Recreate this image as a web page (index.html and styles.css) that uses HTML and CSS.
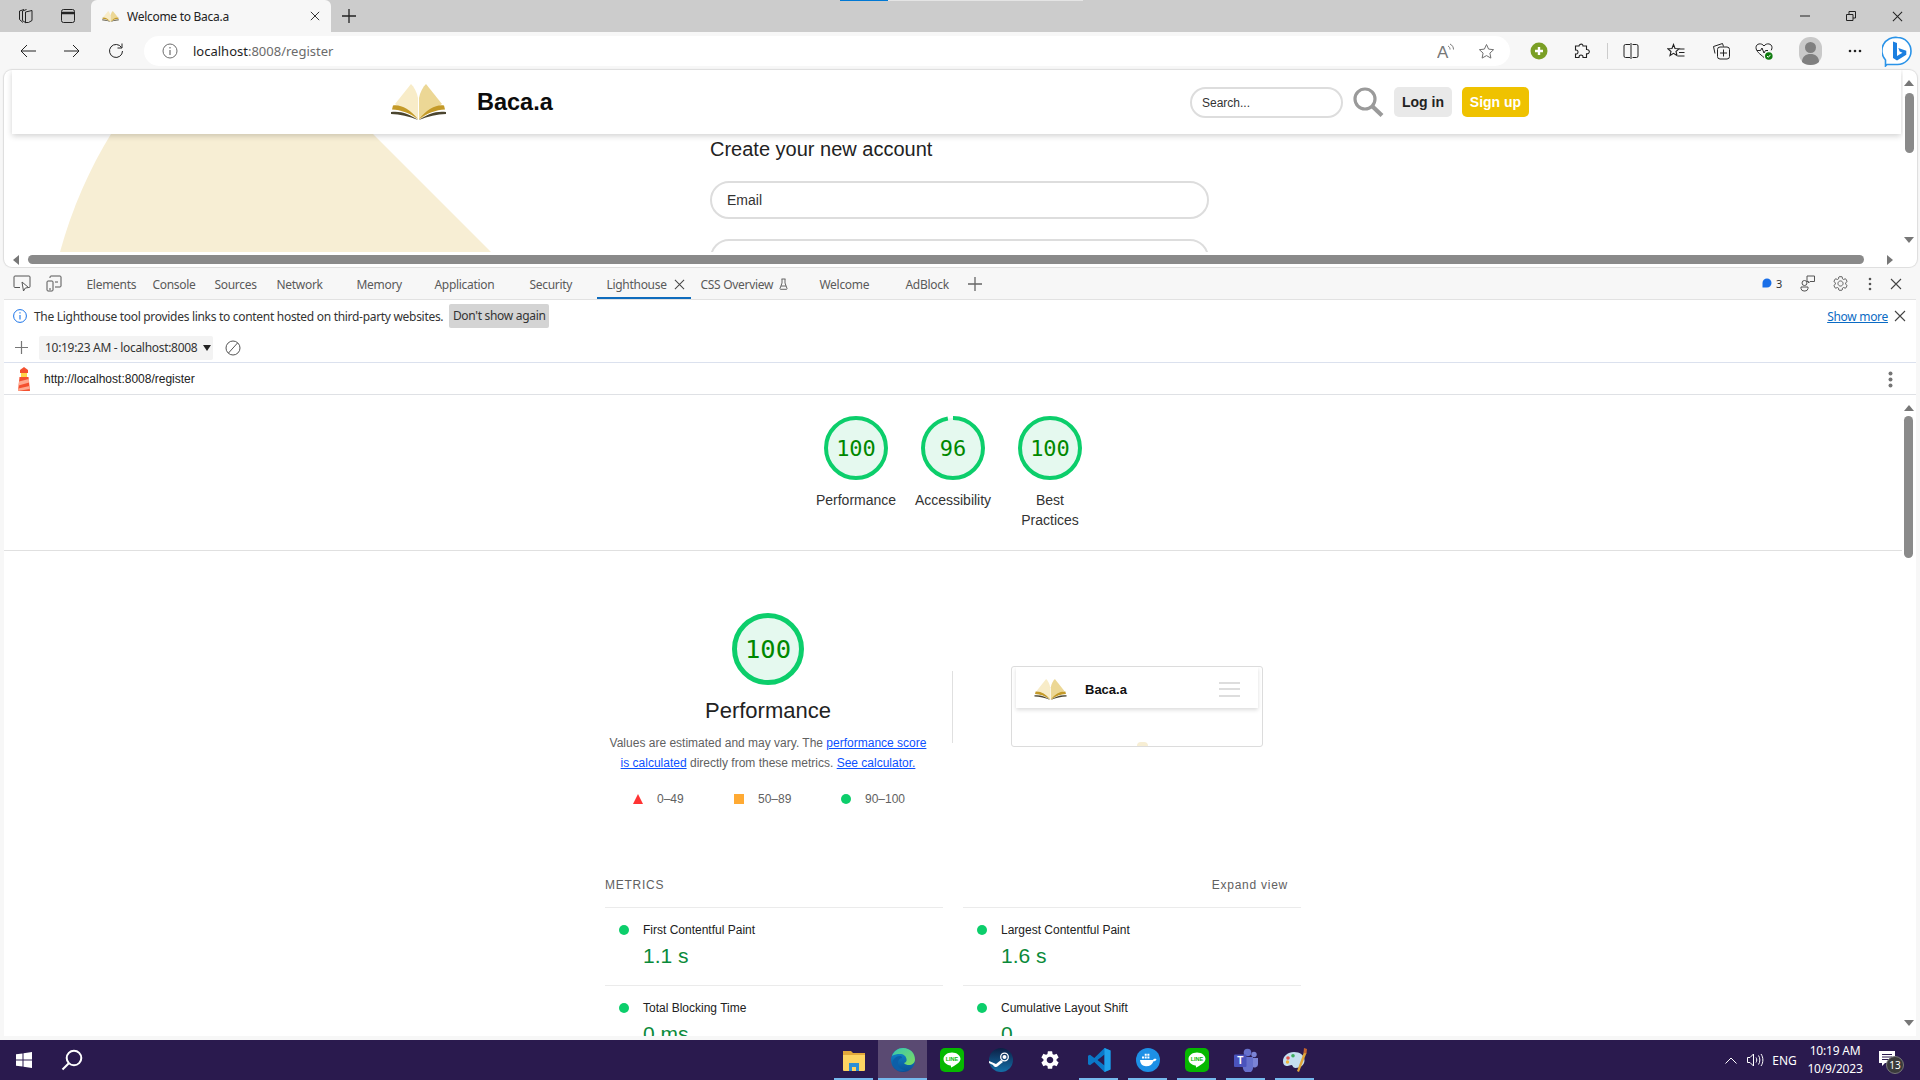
FILE: index.html
```html
<!DOCTYPE html>
<html lang="en">
<head>
<meta charset="utf-8">
<title>Welcome to Baca.a</title>
<link rel="stylesheet" href="styles.css">
</head>
<body>
<svg class="defs" aria-hidden="true">
  <symbol id="book" viewBox="0 0 55 36">
    <path d="M20 0 4 20l23 16V14C26 8 23 3 20 0Z" fill="#f8ecc8"/>
    <path d="M35 0 51 20 28 36V14C29 8 32 3 35 0Z" fill="#ecd795"/>
    <path d="M2 21.500C9 20 19 25 27 35 19 29 10 26 1 25.500Z" fill="#c49a28"/>
    <path d="M53 21.500C46 20 36 25 28 35 36 29 45 26 54 25.500Z" fill="#c49a28"/>
    <path d="M0 28C9 26.500 19 30 27 36 18 32 9 30.500 0 30Z" fill="#4b452f"/>
    <path d="M55 28C46 26.500 36 30 28 36 37 32 46 30.500 55 30Z" fill="#4b452f"/>
  </symbol>
  <symbol id="cross" viewBox="0 0 12 12"><path d="M1 1l10 10M11 1 1 11" fill="none" stroke="currentColor" stroke-width="1.100"/></symbol>
  <symbol id="plus" viewBox="0 0 14 14"><path d="M7 0v14M0 7h14" fill="none" stroke="currentColor" stroke-width="1.300"/></symbol>
  <symbol id="gear" viewBox="0 0 24 24"><path d="M19.140 12.940c.04-.3.06-.61.06-.94 0-.32-.02-.64-.07-.94l2.030-1.580a.49.49 0 0 0 .12-.61l-1.920-3.320a.488.488 0 0 0-.59-.22l-2.390.96c-.5-.38-1.030-.7-1.620-.94l-.36-2.540a.484.484 0 0 0-.48-.41h-3.840c-.24 0-.43.17-.47.41l-.36 2.540c-.59.24-1.130.57-1.620.94l-2.390-.96c-.22-.08-.47 0-.59.22L2.740 8.870c-.12.21-.08.47.12.61l2.030 1.580c-.05.3-.09.63-.09.94s.02.64.07.94l-2.030 1.580a.49.49 0 0 0-.12.61l1.920 3.320c.12.22.37.29.59.22l2.390-.96c.5.38 1.030.7 1.620.94l.36 2.540c.05.24.24.41.48.41h3.840c.24 0 .44-.17.47-.41l.36-2.540c.59-.24 1.130-.56 1.620-.94l2.390.96c.22.08.47 0 .59-.22l1.920-3.320c.12-.22.07-.47-.12-.61l-2.010-1.580zM12 15.600c-1.980 0-3.600-1.620-3.600-3.600s1.620-3.600 3.600-3.600 3.600 1.620 3.600 3.600-1.620 3.600-3.600 3.600z"/></symbol>
  <symbol id="line" viewBox="0 0 24 24">
    <rect width="24" height="24" rx="5" fill="#06b800"/>
    <path d="M12 4.500c-4.700 0-8.500 2.900-8.500 6.600 0 3.300 3 6 7 6.500.6.100.5.700.4 1.400 0 .5.300.6.800.3 2.200-1.300 8.800-4.500 8.800-8.200 0-3.700-3.800-6.600-8.500-6.600Z" fill="#fff"/>
  </symbol>
</svg>

<div class="progress"><span class="progress-on"></span><span class="progress-off"></span></div>

<header class="titlebar">
  <div class="slot-title">
    <svg width="16" height="16" viewBox="0 0 16 16" class="ink"><path d="M6 1.500 1.500 3v8.500L5 14.500M8.500 1.500 4.500 3v9.500l3.500 2.500M7.500 4l6.500-1.500v10L10.500 14.500H7.500Z" fill="none" stroke="currentColor"/></svg>
  </div>
  <div class="slot-title">
    <svg width="16" height="16" viewBox="0 0 16 16" class="ink"><rect x="1.500" y="1.500" width="13" height="13" rx="2" fill="none" stroke="currentColor"/><path d="M1.500 5h13" stroke="currentColor" stroke-width="2.500"/></svg>
  </div>
  <div class="tab">
    <svg class="tab-fav" width="17" height="11"><use href="#book"/></svg>
    <span class="tab-title">Welcome to Baca.a</span>
    <svg class="tab-close ink" width="10" height="10"><use href="#cross"/></svg>
  </div>
  <div class="slot-new ink"><svg width="14" height="14"><use href="#plus"/></svg></div>
  <div class="winctl">
    <div class="win-btn ink"><svg width="10" height="10" viewBox="0 0 10 10"><path d="M0 5h10" stroke="currentColor"/></svg></div>
    <div class="win-btn ink"><svg width="10" height="10" viewBox="0 0 10 10"><path d="M.5 3.500h6.500v6H.5zM3 3.500V.5h6.500V7H7" fill="none" stroke="currentColor"/></svg></div>
    <div class="win-btn ink"><svg width="11" height="11"><use href="#cross"/></svg></div>
  </div>
</header>

<nav class="toolbar">
  <div class="nav-btn ink"><svg width="16" height="14" viewBox="0 0 16 14"><path d="M7 1 1 7l6 6M1 7h15" fill="none" stroke="currentColor"/></svg></div>
  <div class="nav-btn ink"><svg width="16" height="14" viewBox="0 0 16 14"><path d="M9 1l6 6-6 6M15 7H0" fill="none" stroke="currentColor"/></svg></div>
  <div class="nav-btn ink"><svg width="16" height="16" viewBox="0 0 16 16"><path d="M13.500 4.500A6.500 6.500 0 1 0 14.500 8M14 .5v4.500H9.500" fill="none" stroke="currentColor"/></svg></div>
  <div class="address">
    <svg class="addr-info" width="16" height="16" viewBox="0 0 16 16"><circle cx="8" cy="8" r="7" fill="none" stroke="#6e6e6e"/><path d="M8 7v5M8 4v1.500" stroke="#6e6e6e" stroke-width="1.200"/></svg>
    <span class="addr-text"><span class="addr-host">localhost</span>:8008/register</span>
    <div class="addr-end">
      <div class="addr-btn"><svg width="18" height="22" viewBox="0 -3 18 22"><text x="0" y="14.500" class="read-a">A</text><path d="M11 3c1.500.8 2 2 2 3.500M13 1c2.500 1.300 3.500 3.300 3.500 5.500" fill="none" stroke="#777"/></svg></div>
      <div class="addr-btn"><svg width="17" height="17" viewBox="0 0 17 17"><path d="m8.500 1.500 2.100 4.600 5 .6-3.700 3.400 1 5-4.400-2.500-4.400 2.500 1-5L1.400 6.700l5-.6Z" fill="none" stroke="#707070"/></svg></div>
    </div>
  </div>
  <div class="tools">
    <div class="tool"><svg width="18" height="18" viewBox="0 0 18 18"><circle cx="9" cy="9" r="8.500" fill="#7a9f25"/><path d="M9 5v8M5 9h8" stroke="#fff" stroke-width="2.400"/></svg></div>
    <div class="tool ink"><svg width="16" height="17" viewBox="0 0 16 17"><path d="M6 1.500c1.500-1 3 0 3 1.500h3.500v3.500c1.800-.2 3 1 2.800 2.500-.2 1.300-1.300 2-2.800 1.800v3.700H9c.2-1.500-.8-2.500-2-2.500s-2 1-2 2.500H1.500V11c1.500.2 2.500-.6 2.500-2s-1-2.300-2.500-2V3H5c0-.6.400-1.100 1-1.500Z" fill="none" stroke="currentColor" stroke-width="1.100"/></svg></div>
    <div class="tool-sep"></div>
    <div class="tool ink"><svg width="16" height="16" viewBox="0 0 16 16"><path d="M7 1.500H2.500a1.500 1.500 0 0 0-1.500 1.500v10a1.500 1.500 0 0 0 1.500 1.500H7M9.500 1.500h4A1.500 1.500 0 0 1 15 3v10a1.500 1.500 0 0 1-1.500 1.500h-4M8 0v16" fill="none" stroke="currentColor"/></svg></div>
    <div class="tool ink"><svg width="18" height="17" viewBox="0 0 18 17"><path d="M6.500 1.500 8 5.500l4 .3-3 2.700 1 4-3.500-2.200L3 12.500l1-4-3-2.700 4-.3ZM12 6h5.500M12 9.500h5.500M11 13h6.500" fill="none" stroke="currentColor" stroke-width="1.100"/></svg></div>
    <div class="tool ink"><svg width="18" height="18" viewBox="0 0 18 18"><path d="M3 11.500 1.500 4.500 10.500 1.500l1 3" fill="none" stroke="currentColor"/><rect x="5.500" y="5" width="12" height="12" rx="2.500" fill="#f7f7f7" stroke="currentColor"/><path d="M11.500 7.500v7M8 11h7" stroke="currentColor"/></svg></div>
    <div class="tool ink"><svg width="18" height="18" viewBox="0 0 18 18"><path d="M9 15.500C5 12 1 9.500 1 5.500 1 1.500 6.500.5 9 4c2.500-3.500 8-2.500 8 1.500 0 1-.3 2-.8 2.800" fill="none" stroke="currentColor"/><path d="M2 8.500h3.500L7 6l2 5 1.500-2.500H13" fill="none" stroke="currentColor"/><circle cx="13.800" cy="14" r="3.800" fill="#0f7b0f"/><path d="m12 14 1.300 1.300 2.200-2.500" fill="none" stroke="#fff"/></svg></div>
    <div class="tool"><svg width="23" height="28" viewBox="0 0 23 28"><rect width="23" height="28" rx="11" fill="#c9c9c9"/><circle cx="11.500" cy="10.500" r="5.500" fill="#7f7f7f"/><path d="M3 25c0-5.500 4-8 8.500-8s8.500 2.500 8.500 8c-2 2-5 3-8.500 3S5 27 3 25Z" fill="#7f7f7f"/></svg></div>
    <div class="tool ink"><svg width="14" height="4" viewBox="0 0 14 4"><circle cx="2" cy="2" r="1.300"/><circle cx="7" cy="2" r="1.300"/><circle cx="12" cy="2" r="1.300"/></svg></div>
    <div class="tool"><svg width="31" height="31" viewBox="0 0 31 31"><path d="M15.500 1.500a13.500 13.500 0 0 1 0 27H5l-1.500 1.500v-6A13.500 13.500 0 0 1 15.500 1.500Z" fill="#fff" stroke="#2a93e8" stroke-width="1.600"/><path d="M11 5.500l4 1.500v13l5.500-3.200-2.800-1.300-1.400-3.500 8 2.800v4l-9.300 5.800L11 22Z" fill="#1b7fe0"/></svg></div>
  </div>
</nav>

<section class="viewport">
  <div class="page-col">
    <div class="page">
      <div class="site-header">
        <svg class="site-logo" width="55" height="36"><use href="#book"/></svg>
        <span class="site-name">Baca.a</span>
        <div class="site-actions">
          <div class="site-search">Search...</div>
          <svg width="31" height="30" viewBox="0 0 31 30"><circle cx="12" cy="12" r="10" fill="none" stroke="#9a9a9a" stroke-width="3.200"/><path d="m19 19 10 9.500" stroke="#9a9a9a" stroke-width="4.200"/></svg>
          <div class="btn btn-login">Log in</div>
          <div class="btn btn-signup">Sign up</div>
        </div>
      </div>
      <div class="page-body">
        <svg class="hero" width="431" height="118" viewBox="0 0 431 118"><path d="M51 0h262l118 118H0C12 74 30 34 51 0Z" fill="#f7eed4"/></svg>
        <div class="signup-form">
          <h1 class="signup-title">Create your new account</h1>
          <div class="field">Email</div>
          <div class="field"></div>
        </div>
      </div>
    </div>
    <div class="hbar">
      <svg width="6" height="10" viewBox="0 0 6 10"><path d="M6 0v10L0 5Z" fill="#777"/></svg>
      <div class="hbar-thumb"></div>
      <svg width="6" height="10" viewBox="0 0 6 10"><path d="M0 0v10l6-5Z" fill="#777"/></svg>
    </div>
  </div>
  <div class="vbar vbar-top">
    <svg class="arrow" width="10" height="6" viewBox="0 0 10 6"><path d="M0 6h10L5 0Z" fill="#777"/></svg>
    <div class="vbar-thumb vbar-thumb-page"></div>
    <svg class="arrow arrow-end" width="10" height="6" viewBox="0 0 10 6"><path d="M0 0h10L5 6Z" fill="#777"/></svg>
  </div>
</section>

<section class="devtools">
  <div class="dt-tabs">
    <div class="dt-ic dt-ic-a"><svg width="18" height="17" viewBox="0 0 18 17"><path d="M7 12.500H2a1 1 0 0 1-1-1V2a1 1 0 0 1 1-1h14a1 1 0 0 1 1 1v9.500a1 1 0 0 1-1 1h-1" fill="none" stroke="#555"/><path d="m9 7 1.500 9 1.800-3 3.200-.5Z" fill="#fff" stroke="#555"/></svg></div>
    <div class="dt-ic dt-ic-b"><svg width="16" height="17" viewBox="0 0 16 17"><rect x="1" y="6" width="6" height="10" rx="1" fill="none" stroke="#555"/><path d="M4 3V2a1 1 0 0 1 1-1h9a1 1 0 0 1 1 1v9a1 1 0 0 1-1 1H9M9 7h3" fill="none" stroke="#555"/><path d="M3 14h2" stroke="#555"/></svg></div>
    <div class="dt-list">
      <span class="dt-tab">Elements</span>
      <span class="dt-tab">Console</span>
      <span class="dt-tab">Sources</span>
      <span class="dt-tab">Network</span>
      <span class="dt-tab">Memory</span>
      <span class="dt-tab">Application</span>
      <span class="dt-tab">Security</span>
      <span class="dt-tab dt-tab-on">Lighthouse<svg class="dt-x" width="11" height="11"><use href="#cross"/></svg></span>
      <span class="dt-tab">CSS Overview<svg class="dt-flask" width="9" height="12" viewBox="0 0 9 12"><path d="M2.500 1h4M3 1v4L1 10.500a.5.5 0 0 0 .5.800h6a.5.500 0 0 0 .5-.8L6 5V1M2 8h5" fill="none" stroke="#666"/></svg></span>
      <span class="dt-tab">Welcome</span>
      <span class="dt-tab">AdBlock<svg class="dt-plus" width="14" height="14"><use href="#plus"/></svg></span>
    </div>
    <div class="dt-right">
      <span class="dt-count"><svg width="10" height="11" viewBox="0 0 10 11"><path d="M5 .5a4.500 4.500 0 0 1 0 9H0.500V5A4.500 4.500 0 0 1 5 .5Z" fill="#1a6fe8"/></svg>3</span>
      <div class="dt-rbtn dt-r1"><svg width="16" height="17" viewBox="0 0 16 17"><circle cx="4.500" cy="8" r="2.500" fill="none" stroke="#555"/><path d="M1 12h7v1.500A3 3 0 0 1 5 16H4a3 3 0 0 1-3-2.500ZM7 1h7.500v5.500H10L8.500 8V6.500H7Z" fill="none" stroke="#555"/></svg></div>
      <div class="dt-rbtn dt-r2"><svg class="gear-line" width="17" height="17"><use href="#gear"/></svg></div>
      <div class="dt-rbtn dt-r3"><svg width="4" height="14" viewBox="0 0 4 14"><circle cx="2" cy="2" r="1.300" fill="#555"/><circle cx="2" cy="7" r="1.300" fill="#555"/><circle cx="2" cy="12" r="1.300" fill="#555"/></svg></div>
      <div class="dt-rbtn dt-r4"><svg width="12" height="12"><use href="#cross"/></svg></div>
    </div>
  </div>
  <div class="infobar">
    <svg width="14" height="14" viewBox="0 0 14 14"><circle cx="7" cy="7" r="6.400" fill="none" stroke="#1a73e8"/><path d="M7 6v4.500M7 3.200v1.400" stroke="#1a73e8" stroke-width="1.100"/></svg>
    <span class="info-text">The Lighthouse tool provides links to content hosted on third-party websites.</span>
    <span class="info-btn">Don't show again</span>
    <span class="info-more">Show more</span>
    <svg class="info-x" width="12" height="12"><use href="#cross"/></svg>
  </div>
  <div class="lh-bar">
    <div class="lh-add"><svg width="13" height="13"><use href="#plus"/></svg></div>
    <div class="lh-select">10:19:23 AM - localhost:8008<svg width="8" height="6" viewBox="0 0 8 6"><path d="M0 0h8L4 6Z" fill="#222"/></svg></div>
    <svg class="lh-block" width="16" height="16" viewBox="0 0 16 16"><circle cx="8" cy="8" r="7" fill="none" stroke="#555"/><path d="M3.500 13 12.500 3" stroke="#555"/></svg>
  </div>
  <div class="lh-url">
    <svg width="16" height="24" viewBox="0 0 16 24"><path d="M8 0 12 3v3H4V3Z" fill="#f4502f"/><rect x="5" y="6" width="6" height="4" fill="#ffd54a"/><path d="M3.500 10h9l1.500 14H2Z" fill="#f4502f"/><path d="M3 14.500 12.800 12l.4 3.500L2.600 18.500ZM2.300 21.500 13.500 19l.3 3L2 24Z" fill="#ffa98f"/></svg>
    <span class="lh-url-text">http://localhost:8008/register</span>
    <svg class="lh-url-dots" width="5" height="17" viewBox="0 0 5 17"><circle cx="2.500" cy="2.500" r="2" fill="#757575"/><circle cx="2.500" cy="8.500" r="2" fill="#757575"/><circle cx="2.500" cy="14.500" r="2" fill="#757575"/></svg>
  </div>
  <div class="report-wrap">
    <div class="report">
      <div class="scores">
        <div class="score">
          <svg class="gauge" width="64" height="64" viewBox="0 0 64 64"><circle cx="32" cy="32" r="30" class="g-ring"/><text x="32" y="39.500" class="g-num">100</text></svg>
          <div class="score-label">Performance</div>
        </div>
        <div class="score">
          <svg class="gauge" width="64" height="64" viewBox="0 0 64 64"><circle cx="32" cy="32" r="30" class="g-ring g-ring-96"/><text x="32" y="39.500" class="g-num">96</text></svg>
          <div class="score-label">Accessibility</div>
        </div>
        <div class="score">
          <svg class="gauge" width="64" height="64" viewBox="0 0 64 64"><circle cx="32" cy="32" r="30" class="g-ring"/><text x="32" y="39.500" class="g-num">100</text></svg>
          <div class="score-label">Best Practices</div>
        </div>
      </div>
      <div class="category">
        <div class="cat-top">
          <div class="cat-left">
            <svg class="gauge-big" width="72" height="72" viewBox="0 0 72 72"><circle cx="36" cy="36" r="33.500" class="g-ring g-ring-big"/><text x="36" y="45" class="g-num g-num-big">100</text></svg>
            <h2 class="cat-title">Performance</h2>
            <p class="cat-desc">Values are estimated and may vary. The <a class="lnk">performance score<br>is calculated</a> directly from these metrics. <a class="lnk">See calculator.</a></p>
            <div class="legend">
              <span class="leg"><svg width="10" height="10" viewBox="0 0 10 10"><path d="M5 0l5 10H0Z" fill="#f33"/></svg>0–49</span>
              <span class="leg"><svg width="10" height="10" viewBox="0 0 10 10"><rect width="10" height="10" fill="#fa3"/></svg>50–89</span>
              <span class="leg"><svg width="10" height="10" viewBox="0 0 10 10"><circle cx="5" cy="5" r="5" fill="#0cce6b"/></svg>90–100</span>
            </div>
          </div>
          <div class="cat-rule"></div>
          <div class="shot">
            <div class="shot-head">
              <svg width="33" height="21"><use href="#book"/></svg>
              <span class="shot-name">Baca.a</span>
              <div class="shot-menu"><i></i><i></i><i></i></div>
            </div>
            <div class="shot-body"><span class="shot-dot"></span></div>
          </div>
        </div>
        <div class="metrics-head"><span class="metrics-title">METRICS</span><span class="metrics-expand">Expand view</span></div>
        <div class="metrics">
          <div class="metric"><span class="m-dot"></span><div><div class="m-name">First Contentful Paint</div><div class="m-val">1.1 s</div></div></div>
          <div class="metric"><span class="m-dot"></span><div><div class="m-name">Largest Contentful Paint</div><div class="m-val">1.6 s</div></div></div>
          <div class="metric"><span class="m-dot"></span><div><div class="m-name">Total Blocking Time</div><div class="m-val">0 ms</div></div></div>
          <div class="metric"><span class="m-dot"></span><div><div class="m-name">Cumulative Layout Shift</div><div class="m-val">0</div></div></div>
        </div>
      </div>
    </div>
    <div class="vbar vbar-report">
      <svg class="arrow" width="10" height="6" viewBox="0 0 10 6"><path d="M0 6h10L5 0Z" fill="#777"/></svg>
      <div class="vbar-thumb vbar-thumb-report"></div>
      <svg class="arrow arrow-end" width="10" height="6" viewBox="0 0 10 6"><path d="M0 0h10L5 6Z" fill="#777"/></svg>
    </div>
  </div>
</section>

<footer class="taskbar">
  <div class="tb-slot"><svg width="16" height="16" viewBox="0 0 16 16"><path d="M0 2.300 6.500 1.400V7.500H0ZM7.500 1.300 16 0v7.500H7.500ZM0 8.500h6.500v6.100L0 13.700ZM7.500 8.500H16V16l-8.500-1.300Z" fill="#fff"/></svg></div>
  <div class="tb-slot"><svg width="22" height="22" viewBox="0 0 22 22"><circle cx="13" cy="9" r="7.300" fill="none" stroke="#fff" stroke-width="2"/><path d="M7.800 14.200 1.500 20.500" stroke="#fff" stroke-width="2"/></svg></div>
  <div class="apps">
    <div class="app app-run"><svg width="24" height="22" viewBox="0 0 24 22"><path d="M1 2h8l2 2h12v4H1Z" fill="#e2a83a"/><path d="M1 6h22v15a1 1 0 0 1-1 1H2a1 1 0 0 1-1-1Z" fill="#fcd462"/><path d="M7 14h10v8h-3v-4h-4v4H7Z" fill="#2a8fd6"/></svg></div>
    <div class="app app-on"><svg width="24" height="24" viewBox="0 0 24 24"><defs><linearGradient id="edgeB" x1="0" y1="0" x2="0" y2="1"><stop offset="0" stop-color="#0f8fd0"/><stop offset="1" stop-color="#0a4f96"/></linearGradient><linearGradient id="edgeG" x1="0" y1="0" x2="1" y2="1"><stop offset="0" stop-color="#38c8b0"/><stop offset="1" stop-color="#7fdc5e"/></linearGradient></defs><circle cx="12" cy="12" r="12" fill="url(#edgeB)"/><path d="M1 8C3 3 7 0 12 0c7 0 12 5 12 11.500 0 3.500-3 5.500-6 5.500-2 0-4-.5-5-2 2-.5 3-2 2.500-4C15 8 12.500 6 9 6 6 6 3 6.500 1 8Z" fill="url(#edgeG)"/><path d="M11 10c-3 .5-4.500 3-4 6 .5 3.500 3.500 6 8 6-5 3-12 .5-13.500-6C1 12 5 8 9 8c1 0 2 .5 2 2Z" fill="#0c5fa8"/></svg></div>
    <div class="app"><svg width="24" height="26" viewBox="0 0 24 24"><use href="#line"/><text x="12" y="13.300" class="line-word">LINE</text></svg></div>
    <div class="app"><svg width="24" height="24" viewBox="0 0 24 24"><defs><linearGradient id="steamG" x1="0" y1="0" x2="0" y2="1"><stop offset="0" stop-color="#0c1f45"/><stop offset="1" stop-color="#1470a8"/></linearGradient></defs><circle cx="12" cy="12" r="12" fill="url(#steamG)"/><circle cx="15.500" cy="9" r="3.800" fill="none" stroke="#fff" stroke-width="1.300"/><circle cx="15.500" cy="9" r="2" fill="#fff"/><path d="M0 13l7 3 5-4 2 2-5 4a3 3 0 0 1-5-1L0 15Z" fill="#fff"/></svg></div>
    <div class="app"><svg class="gear-white" width="22" height="22"><use href="#gear"/></svg></div>
    <div class="app app-run"><svg width="24" height="26" viewBox="0 0 24 24"><path d="M17.500 0 7.300 10 3 6.700 1 7.700v8.600l2 1 4.300-3.300L17.500 24l6-2.500V2.500ZM17.500 6.500v11L10.500 12Z" fill="#0a78c8" fill-rule="evenodd"/><path d="M17.500 0l6 2.500v19l-6 2.500Z" fill="#1fa0ea"/></svg></div>
    <div class="app app-run"><svg width="24" height="24" viewBox="0 0 24 24"><circle cx="12" cy="12" r="12" fill="#1d90e6"/><path d="M4 12h13c.5-1 2-1.500 3.500-.8-.5 1.500-1.500 2-3 2-1 3-3.500 5-7.500 5-3.500 0-5.500-2-6-6.200Z" fill="#fff"/><path d="M6 8.500h2v2H6ZM8.700 8.500h2v2h-2ZM11.400 8.500h2v2h-2ZM8.700 5.800h2v2h-2ZM11.400 5.800h2v2h-2Z" fill="#fff"/></svg></div>
    <div class="app app-run"><svg width="24" height="26" viewBox="0 0 24 24"><use href="#line"/><text x="12" y="13.300" class="line-word">LINE</text></svg></div>
    <div class="app app-run"><svg width="24" height="24" viewBox="0 0 24 24"><circle cx="20" cy="6.500" r="2.700" fill="#7b83d6"/><path d="M17 10h7v6a3.500 3.500 0 0 1-6 2.500Z" fill="#7b83d6"/><circle cx="13.500" cy="4.500" r="3.800" fill="#6670cc"/><path d="M7 9h12v10a5 5 0 0 1-10 1.500Z" fill="#6670cc"/><rect y="6.500" width="12.500" height="12.500" rx="1" fill="#4a53bc"/><text x="6.250" y="16.300" class="teams-t">T</text></svg></div>
    <div class="app app-run"><svg width="24" height="26" viewBox="0 0 24 26"><path d="M11 5C5 5 0 9 0 14c0 4 2 5 4.500 5 1.500 0 2.500-1 4-1s1 3 4 3c5 0 9-3 9-7.500C21.500 8 17 5 11 5Z" fill="#c5dff0"/><circle cx="5" cy="11" r="1.800" fill="#e5534b"/><circle cx="10" cy="8.800" r="1.800" fill="#3dae5f"/><circle cx="4.500" cy="15" r="1.700" fill="#f0b73b"/><path d="M14 24 21 5l2.500 1L16 25Z" fill="#e0a63a"/><path d="M20.500 6 21 1l3 1-.5 4.500Z" fill="#c2622d"/></svg></div>
  </div>
  <div class="tray">
    <div class="tr-slot tr-caret"><svg width="12" height="7" viewBox="0 0 12 7"><path d="M.5 6.500 6 1l5.500 5.500" fill="none" stroke="#fff"/></svg></div>
    <div class="tr-slot tr-vol"><svg width="17" height="14" viewBox="0 0 17 14"><path d="M.5 4.500H3L6.500 1v12L3 9.500H.5ZM9 4.500c1 1.500 1 3.500 0 5M11.500 2.500c1.800 2.500 1.800 6.500 0 9M14 1c2.500 3.500 2.500 8.500 0 12" fill="none" stroke="#fff"/></svg></div>
    <div class="tr-slot tr-lang">ENG</div>
    <div class="tr-clock"><span>10:19 AM</span><span>10/9/2023</span></div>
    <div class="tr-note">
      <svg width="16" height="15" viewBox="0 0 16 15"><path d="M0 0h16v12H6L3 15v-3H0Z" fill="#fff"/><path d="M3 3.500h10M3 6h10M3 8.500h7" stroke="#2a1a4e"/></svg>
      <span class="tr-badge">13</span>
    </div>
  </div>
</footer>
</body>
</html>
```
FILE: styles.css
```css
* { box-sizing: border-box; }
html, body { margin: 0; height: 100%; }
body {
  width: 1920px;
  height: 1080px;
  overflow: hidden;
  display: flex;
  flex-direction: column;
  position: relative;
  background: #f7f7f7;
  font-family: "Liberation Sans", Arial, sans-serif;
  color: #222;
}
svg { display: block; flex: none; }
.defs { width: 0; height: 0; position: absolute; }
.ink { color: #222; fill: #222; }
.ink svg { fill: #222; }

.progress { position: absolute; top: 0; left: 840px; display: flex; height: 1px; }
.progress-on { width: 48px; background: #0078d4; }
.progress-off { width: 195px; background: #e4e4e4; }

/* window title bar */
.titlebar { height: 32px; flex: none; display: flex; padding-left: 5px; background: #ccc; }
.slot-title { width: 42px; display: flex; align-items: center; justify-content: center; }
.tab { width: 240px; margin-left: 2px; display: flex; align-items: center; background: #f7f7f7; border-radius: 6px 6px 0 0; padding-left: 11px; }
.tab-title { margin-left: 8px; font: 12px "Noto Sans", sans-serif; letter-spacing: -.28px; color: #222; }
.tab-close { margin-left: auto; margin-right: 11px; }
.slot-new { width: 36px; display: flex; align-items: center; justify-content: center; }
.winctl { margin-left: auto; display: flex; }
.win-btn { width: 46px; display: flex; align-items: center; justify-content: center; }

/* browser toolbar */
.toolbar { height: 38px; flex: none; padding: 4px 0 4px 6px; display: flex; align-items: center; background: #f7f7f7; }
.nav-btn { width: 44px; display: flex; justify-content: center; }
.nav-btn svg { fill: none; }
.address { width: 1366px; height: 30px; margin-left: 6px; display: flex; align-items: center; padding: 0 4px 0 18px; background: #fff; border-radius: 15px; }
.addr-text { margin-left: 15px; font: 13px "Noto Sans", sans-serif; color: #6b6b6b; }
.addr-host { color: #1e1e1e; }
.addr-end { margin-left: auto; display: flex; align-items: center; }
.addr-btn { width: 40px; display: flex; justify-content: center; }
.read-a { font: 17px "Liberation Sans", sans-serif; fill: #777; }
.tools { margin-left: 7px; display: grid; grid-template-columns: 44px 42px 8px 40px 50px 40px 46px 46px 44px 40px; align-items: center; }
.tool { display: flex; justify-content: center; align-items: center; height: 30px; }
.tool svg { fill-opacity: 1; }
.tool-sep { width: 1px; height: 16px; margin: 0 auto; background: #ccc; }

/* inspected page */
.viewport {
  width: 1913px; height: 197px; flex: none; margin-left: 4px;
  display: grid; grid-template-columns: 1fr 14px;
  background: #fff; border-radius: 8px; box-shadow: 0 0 1px 1px #dcdcdc; overflow: hidden;
}
.page-col { display: flex; flex-direction: column; min-width: 0; }
.page { height: 182px; overflow: hidden; }
.site-header {
  position: relative; z-index: 1;
  width: 1889px; height: 64px; margin-left: 8px;
  display: flex; align-items: center; padding: 0 372px 0 379px;
  background: #fff; box-shadow: 0 2px 6px rgba(0,0,0,.18);
}
.site-name { margin-left: 31px; font-size: 23.5px; font-weight: 700; color: #0c0c0c; }
.site-actions { margin-left: auto; display: flex; align-items: center; gap: 10px; }
.site-search { width: 153px; height: 31px; padding-left: 10px; border: 2px solid #ddd; border-radius: 16px; font-size: 12px; line-height: 28px; color: #333; }
.btn { height: 30px; border-radius: 5px; font-size: 14px; font-weight: 700; line-height: 30px; text-align: center; }
.btn-login { width: 58px; background: #e9e9e9; color: #222; }
.btn-signup { width: 67px; background: #efc200; color: #fff; }
.page-body { display: flex; height: 118px; }
.hero { margin-left: 56px; }
.signup-form { width: 499px; margin-left: 219px; padding-top: 3px; }
.signup-title { margin: 0 0 20px; font-size: 20px; font-weight: 400; line-height: 24px; color: #222; }
.field { height: 38px; margin-bottom: 20px; padding-left: 15px; border: 2px solid #ddd; border-radius: 19px; font-size: 14px; line-height: 34px; color: #333; }
.hbar { height: 15px; display: flex; align-items: center; padding-left: 9px; }
.hbar-thumb { width: 1836px; height: 9px; margin: 0 23px 0 9px; background: #8a8a8a; border-radius: 5px; }
.vbar { display: flex; flex-direction: column; align-items: center; }
.vbar-top { padding: 10px 2px 0 0; }
.vbar-thumb { width: 9px; margin-top: 7px; background: #8a8a8a; border-radius: 5px; }
.vbar-thumb-page { height: 60px; }
.vbar-top .arrow-end { margin-top: 84px; }

/* devtools */
.devtools { flex: 1; min-height: 0; width: 1912px; margin-left: 4px; margin-top: 1px; display: flex; flex-direction: column; background: #fff; }
.dt-tabs { height: 32px; flex: none; display: flex; align-items: center; background: #f7f7f7; border-bottom: 1px solid #e2e2e2; }
.dt-ic { display: flex; justify-content: center; }
.dt-ic-a { width: 36px; }
.dt-ic-b { width: 28px; }
.dt-list { margin-left: 18.500px; display: grid; grid-template-columns: 66px 62px 62px 80px 78px 95px 77px 94px 119px 86px auto; align-items: center; height: 31px; }
.dt-tab { display: flex; align-items: center; height: 31px; padding-top: 1px; font: 12px "Noto Sans", sans-serif; letter-spacing: -.3px; color: #5a5a5a; position: relative; }
.dt-tab-on::after { content: ""; position: absolute; left: -10px; bottom: 0; width: 94px; height: 2px; background: #0f6cbd; }
.dt-x { margin-left: 7px; color: #444; }
.dt-flask { margin-left: 6px; }
.dt-plus { margin-left: 19px; color: #666; }
.dt-right { margin-left: auto; display: flex; align-items: center; padding-right: 10px; }
.dt-count { display: flex; align-items: center; gap: 4px; width: 28px; font: 11px "Noto Sans", sans-serif; color: #333; }
.dt-rbtn { display: flex; justify-content: center; color: #444; }
.dt-r1 { width: 36px; }
.dt-r2 { width: 28px; }
.dt-r3 { width: 32px; }
.dt-r4 { width: 20px; }
.gear-line { fill: none; stroke: #555; stroke-width: 1.300px; }
.infobar { height: 32px; flex: none; display: flex; align-items: center; padding: 0 10px 0 9px; font: 12px "Noto Sans", sans-serif; letter-spacing: -.3px; color: #333; }
.info-text { margin-left: 7px; }
.info-btn { margin-left: 6px; width: 100px; height: 24px; line-height: 24px; text-align: center; background: #d4d4d4; border-radius: 2px; }
.info-more { margin-left: auto; color: #0b6bc4; text-decoration: underline; }
.info-x { margin-left: 6px; color: #444; }
.lh-bar { height: 31px; flex: none; display: flex; align-items: center; padding-top: 1px; border-bottom: 1px solid #dbe1ee; }
.lh-add { width: 35px; display: flex; justify-content: center; color: #777; }
.lh-select { width: 174px; height: 24px; padding: 0 2px 0 6px; display: flex; align-items: center; justify-content: space-between; background: #f3f3f3; border-radius: 2px; font: 12px "Noto Sans", sans-serif; letter-spacing: -.3px; color: #333; }
.lh-block { margin-left: 12px; }
.lh-url { height: 32px; flex: none; display: flex; align-items: center; padding: 1px 23px 0 12px; border-bottom: 1px solid #dfe1e5; }
.lh-url-text { margin-left: 12px; font-size: 12px; color: #222; }
.lh-url-dots { margin-left: auto; }

.report-wrap { flex: 1; min-height: 0; display: grid; grid-template-columns: 1fr 14px; overflow: hidden; }
.report { min-width: 0; height: 641px; overflow: hidden; }
.scores { display: flex; justify-content: center; padding: 21px 0 20px; border-bottom: 1px solid #e0e0e0; }
.score { width: 97px; display: flex; flex-direction: column; align-items: center; }
.score-label { margin-top: 10px; width: 84px; text-align: center; font-size: 14px; line-height: 20px; color: #333; white-space: normal; }
.score:first-child .score-label, .score:nth-child(2) .score-label { width: 97px; }
.g-ring { fill: #e5f9ef; stroke: #0cce6b; stroke-width: 4px; }
.g-ring-big { stroke-width: 5px; }
.g-ring-96 { stroke-dasharray: 183 6; transform: rotate(-90deg); transform-origin: 32px 32px; }
.g-num { font-family: "DejaVu Sans Mono", monospace; font-size: 22px; fill: #080; text-anchor: middle; }
.g-num-big { font-size: 25.500px; }

.category { width: 696px; margin: 62px auto 0; }
.cat-top { display: flex; align-items: flex-start; }
.cat-left { width: 326px; flex: none; display: flex; flex-direction: column; align-items: center; }
.cat-title { margin: 12px 0 0; font-size: 22px; font-weight: 400; line-height: 28px; color: #222; }
.cat-desc { margin: 8px 0 0; text-align: center; font-size: 12px; line-height: 20px; color: #616161; white-space: nowrap; }
.lnk { color: #0c50ff; text-decoration: underline; }
.legend { align-self: stretch; margin-top: 16px; padding-left: 28px; display: grid; grid-template-columns: 101px 107px auto; font-size: 12px; line-height: 20px; color: #616161; }
.leg { display: flex; align-items: center; gap: 14px; }
.cat-rule { width: 1px; height: 72px; margin: 58px 0 0 21px; background: #e0e0e0; }
.shot { width: 252px; height: 81px; margin: 53px 0 0 58px; border: 1px solid #dcdcdc; border-radius: 3px; background: #fff; overflow: hidden; }
.shot-head { height: 41px; margin: 0 4px 0 4px; padding: 3px 18px 0 18px; display: flex; align-items: center; box-shadow: 0 2px 4px rgba(0,0,0,.14); }
.shot-name { margin-left: 18px; font-size: 13px; font-weight: 700; color: #111; }
.shot-menu { margin-left: auto; display: flex; flex-direction: column; gap: 4.500px; }
.shot-menu i { display: block; width: 21px; height: 2px; background: #ddd; }
.shot-body { height: 38px; display: flex; justify-content: center; align-items: flex-end; padding-left: 10px; }
.shot-dot { width: 11px; height: 4px; background: #f7eed4; border-radius: 6px 6px 0 0; }
.metrics-head { display: flex; justify-content: space-between; margin-top: 66px; padding-right: 13px; font-size: 12px; line-height: 20px; letter-spacing: .75px; color: #616161; }
.metrics { margin-top: 12px; display: grid; grid-template-columns: 338px 338px; column-gap: 20px; }
.metric { height: 78px; padding: 12px 0 0 14px; display: flex; gap: 14px; border-top: 1px solid #ebebeb; }
.m-dot { width: 10px; height: 10px; margin-top: 5px; border-radius: 50%; background: #0cce6b; flex: none; }
.m-name { font-size: 12px; line-height: 20px; color: #212121; }
.m-val { margin-top: 2px; font-size: 21px; line-height: 28px; color: #0a8a3a; }
.vbar-report { padding: 10px 1px 0 0; height: 641px; }
.vbar-thumb-report { height: 142px; margin-top: 5px; }
.vbar-report .arrow-end { margin-top: 462px; }

/* taskbar */
.taskbar { height: 40px; flex: none; margin-top: 4px; display: flex; align-items: center; background: #2a1a4e; }
.tb-slot { width: 48px; height: 40px; display: flex; align-items: center; justify-content: center; }
.apps { margin-left: 733px; display: flex; }
.app { width: 49px; height: 40px; display: flex; align-items: center; justify-content: center; position: relative; }
.app-run::after, .app-on::after { content: ""; position: absolute; left: 5px; right: 5px; bottom: 0; height: 2px; background: #76b9ed; }
.app-on { background: #5a4a72; }
.app-on::after { left: 0; right: 0; }
.gear-white { fill: #fff; }
.line-word { font: 700 5.500px "Liberation Sans", sans-serif; fill: #06b800; text-anchor: middle; }
.teams-t { font: 700 10px "Liberation Sans", sans-serif; fill: #fff; text-anchor: middle; }
.tray { margin-left: auto; display: flex; align-items: center; padding-right: 14px; color: #fff; font: 12px "Noto Sans", sans-serif; }
.tr-slot { display: flex; justify-content: center; }
.tr-caret, .tr-vol { width: 24px; }
.tr-lang { width: 35px; }
.tr-clock { width: 66px; display: flex; flex-direction: column; align-items: center; line-height: 18px; white-space: nowrap; letter-spacing: -.2px; }
.tr-note { width: 38px; height: 32px; position: relative; display: flex; justify-content: center; align-items: center; }
.tr-note svg { margin-top: -4px; }
.tr-badge { position: absolute; left: 18px; top: 12px; width: 18px; height: 18px; border-radius: 50%; background: #3a3a3a; border: 1px solid #777; font-size: 10px; line-height: 16px; text-align: center; }
```
